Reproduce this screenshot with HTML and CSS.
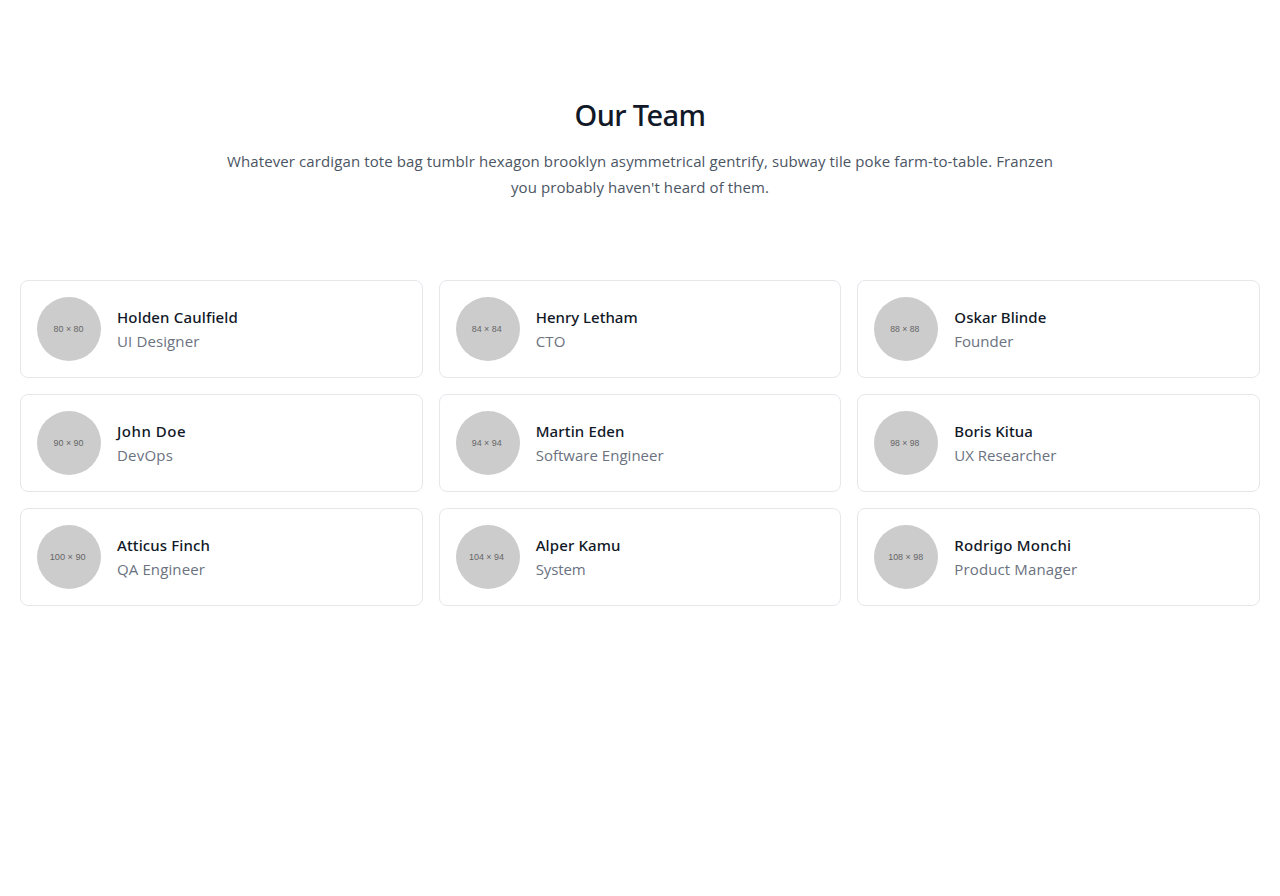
FILE: index.html
```html
<!DOCTYPE html>
<html lang="en">
<head>
<meta charset="utf-8">
<title>Our Team</title>
<link rel="stylesheet" href="styles.css">
</head>
<body>
<section class="team">
  <header class="intro">
    <h1 class="heading"><span class="fit" data-w="131">Our Team</span></h1>
    <p class="lead"><span class="fit" data-w="826">Whatever cardigan tote bag tumblr hexagon brooklyn asymmetrical gentrify, subway tile poke farm-to-table. Franzen</span><br><span class="fit" data-w="258">you probably haven't heard of them.</span></p>
  </header>
  <div class="grid" id="grid"></div>
</section>
<script src="script.js"></script>
</body>
</html>
```

FILE: styles.css
```css
* { box-sizing: border-box; margin: 0; padding: 0; }
body { background: #fff; font-family: "Open Sans", "Noto Sans", sans-serif; font-size: 15px; line-height: 24px; }
.team { padding: 96px 20px; }
.intro { text-align: center; margin-bottom: 80px; }
.heading { font-family: "Noto Sans", sans-serif; font-size: 29px; line-height: 36px; font-weight: 500; color: #111827; padding-top: 1px; margin-bottom: 15px; }
.lead { line-height: 26px; color: #4b5563; white-space: nowrap; }
.grid { display: grid; grid-template-columns: repeat(3, 1fr); gap: 16px; }
.card { display: flex; align-items: center; height: 98px; padding: 16px; border: 1px solid #e5e7eb; border-radius: 8px; }
.avatar { width: 64px; height: 64px; margin-right: 16px; flex: none; }
.disc { fill: #ccc; }
.size { font: 8.5px "Liberation Sans", sans-serif; fill: #666; }
.name { font-family: "Noto Sans", sans-serif; font-size: 15px; font-weight: 500; color: #111827; white-space: nowrap; }
.role { color: #6b7280; white-space: nowrap; }
```

FILE: script.js
```js
const people = [
  ["Holden Caulfield", "UI Designer", "80 × 80", 121, 82.5, 30, 31.5],
  ["Henry Letham", "CTO", "84 × 84", 102, 30, 30, 30.7],
  ["Oskar Blinde", "Founder", "88 × 88", 92, 59, 29, 30.8],
  ["John Doe", "DevOps", "90 × 90", 69, 56, 30, 31.5],
  ["Martin Eden", "Software Engineer", "94 × 94", 89, 128, 30, 30.7],
  ["Boris Kitua", "UX Researcher", "98 × 98", 78.5, 102, 29, 30.8],
  ["Atticus Finch", "QA Engineer", "100 × 90", 93, 88, 36, 30.7],
  ["Alper Kamu", "System", "104 × 94", 85, 50, 35, 30.5],
  ["Rodrigo Monchi", "Product Manager", "108 × 98", 117, 123, 35, 31.7]
];
document.getElementById("grid").innerHTML = people.map(([name, role, size, nw, rw, sw, x]) => `
  <div class="card">
    <svg class="avatar" viewBox="0 0 64 64"><circle class="disc" cx="32" cy="32" r="32"/><text class="size" x="${x}" y="35.2" text-anchor="middle" textLength="${sw}" lengthAdjust="spacingAndGlyphs">${size}</text></svg>
    <div><h2 class="name"><span class="fit" data-w="${nw}">${name}</span></h2><p class="role"><span class="fit" data-w="${rw}">${role}</span></p></div>
  </div>`).join("");

// Track each label so that it fills its intended measure.
document.querySelectorAll(".fit").forEach(el => {
  const extra = (+el.dataset.w - el.getBoundingClientRect().width) / el.textContent.length;
  el.style.letterSpacing = extra + "px";
});
```
